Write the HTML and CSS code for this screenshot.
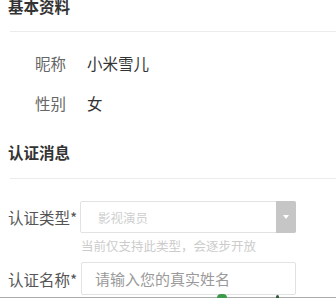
FILE: index.html
```html
<!DOCTYPE html>
<html lang="zh">
<head>
<meta charset="utf-8">
<link rel="stylesheet" href="styles.css">
</head>
<body>
<div class="page">
  <div class="head first"><h2>基本资料</h2></div>
  <div class="info">
    <div class="row"><span class="k">昵称</span><span class="v">小米雪儿</span></div>
    <div class="row"><span class="k">性别</span><span class="v">女</span></div>
  </div>
  <div class="head second"><h2>认证消息</h2></div>
  <div class="form">
    <div class="frow">
      <label class="flabel">认证类型*</label>
      <div class="select">
        <span class="sel-ph">影视演员</span>
        <span class="sel-btn"><span class="tri"></span></span>
      </div>
    </div>
    <div class="hint">当前仅支持此类型，会逐步开放</div>
    <div class="frow second-row">
      <label class="flabel">认证名称*</label>
      <div class="input"><span class="in-ph">请输入您的真实姓名</span></div>
    </div>
  </div>
  <div class="footer">
    <span class="bump green"></span>
    <span class="bump dark"></span>
  </div>
</div>
</body>
</html>
```
FILE: styles.css
```css
html, body {
  margin: 0;
  padding: 0;
  background: #fff;
  overflow: hidden;
}
body {
  font-family: "Noto Sans CJK SC", "Noto Sans", sans-serif;
  width: 336px;
  height: 301px;
}
.page {
  display: flex;
  flex-direction: column;
}
.head {
  margin-left: 10px;
  padding-bottom: 19px;
  border-bottom: 1px solid #ececec;
}
.head h2 {
  margin: 0 0 0 -2px;
  font-size: 15.5px;
  line-height: 13px;
  font-weight: 700;
  color: #333;
}
.head.first {
  margin-top: 0;
  padding-bottom: 18px;
}
.head.second {
  margin-top: 23px;
}
.info {
  padding-top: 11px;
}
.row {
  height: 40px;
  display: flex;
  align-items: center;
  padding-left: 35px;
  font-size: 15.5px;
}
.row .k {
  width: 52px;
  color: #666;
}
.row .v {
  color: #333;
}
.form {
  padding-top: 22px;
}
.frow {
  display: flex;
  align-items: center;
  padding-left: 8px;
}
.flabel {
  width: 72px;
  font-size: 15.5px;
  color: #555;
  white-space: nowrap;
}
.select {
  width: 216px;
  height: 32px;
  box-sizing: border-box;
  border: 1px solid #e2e2e2;
  border-radius: 2px;
  display: flex;
  align-items: center;
  justify-content: space-between;
}
.sel-ph {
  padding-left: 17px;
  font-size: 12.5px;
  color: #cfcfcf;
}
.sel-btn {
  width: 20px;
  height: 32px;
  margin: -1px -1px -1px 0;
  background: #c6c6c6;
  border-radius: 0 2px 2px 0;
  display: flex;
  align-items: center;
  justify-content: center;
}
.tri {
  width: 0;
  height: 0;
  border-left: 3.5px solid transparent;
  border-right: 3.5px solid transparent;
  border-top: 4px solid #fff;
}
.hint {
  margin-top: 6px;
  padding-left: 81px;
  font-size: 12.5px;
  line-height: 14px;
  color: #cccccc;
  white-space: nowrap;
}
.second-row {
  margin-top: 9px;
}
.input {
  width: 215px;
  height: 33px;
  box-sizing: border-box;
  border: 1px solid #e2e2e2;
  border-radius: 2px;
  display: flex;
  align-items: center;
  margin-left: 1px;
}
.in-ph {
  padding-left: 13px;
  font-size: 15px;
  color: #9a9a9a;
  white-space: nowrap;
}
.footer {
  position: relative;
  margin-top: 2px;
  height: 10px;
  border-top: 1px solid #aaa;
}
.bump {
  position: absolute;
  bottom: 100%;
}
.bump.green {
  left: 217px;
  width: 10px;
  height: 4px;
  background: #3a9a4a;
  border-radius: 5px 5px 0 0;
}
.bump.dark {
  left: 276px;
  width: 3px;
  height: 3px;
  background: #2f5a3a;
  border-radius: 2px 2px 0 0;
}
```
